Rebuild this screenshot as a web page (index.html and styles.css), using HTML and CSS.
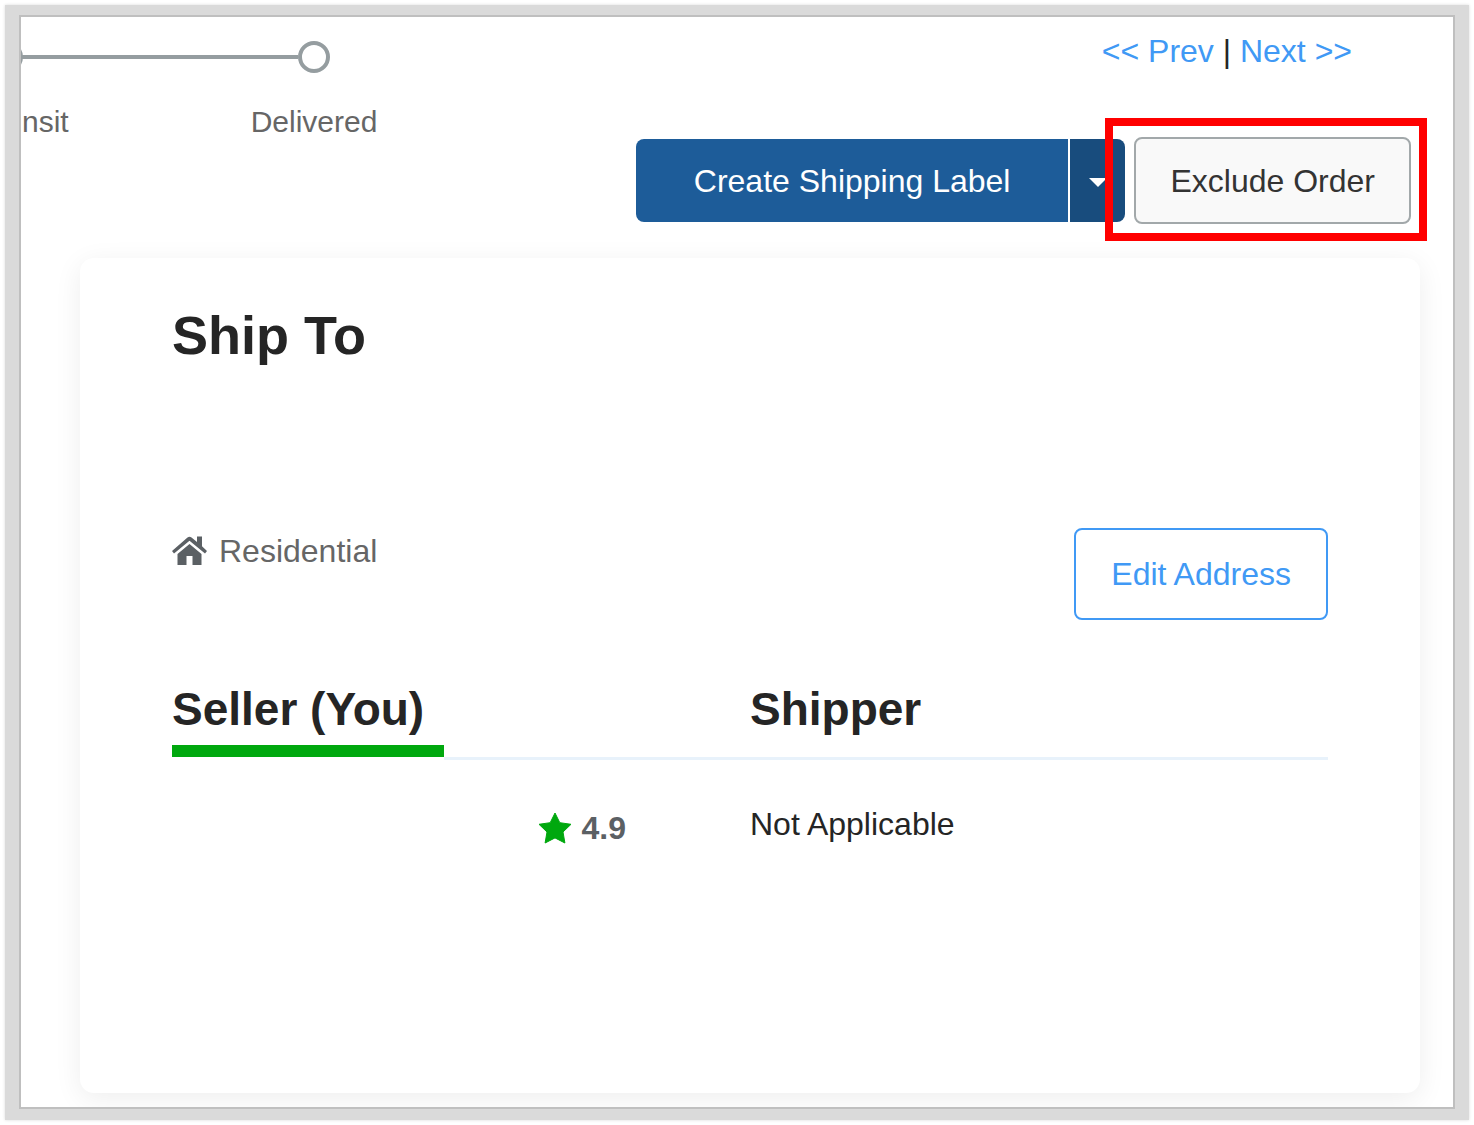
FILE: index.html
```html
<!DOCTYPE html>
<html lang="en">
<head>
	<meta charset="UTF-8">
	<title>Order Details</title>
	<link rel="stylesheet" href="styles.css">
</head>
<body>
	<div class="frame">
		<div class="page">
			<div class="header">
				<ol class="steps">
					<li class="step first"><span class="dot"></span>nsit</li>
					<li class="step"><span class="dot"></span>Delivered</li>
				</ol>
				<div class="tools">
					<div class="pager">
						<a href="#">&lt;&lt; Prev</a> | <a href="#">Next &gt;&gt;</a>
					</div>
					<div class="actions">
						<div class="split">
							<button type="button" class="btn create">Create Shipping Label</button>
							<button type="button" class="btn toggle" aria-label="More options"><span class="caret"></span></button>
						</div>
						<div class="marked">
							<button type="button" class="btn exclude">Exclude Order</button>
						</div>
					</div>
				</div>
			</div>
			<div class="card">
				<h1>Ship To</h1>
				<div class="address">
					<p class="type">
						<svg class="home" viewBox="0 0 36 30" aria-hidden="true">
							<path d="M17.500 8 L29.500 18 V29 H20.500 V20 H14.500 V29 H5.500 V18 Z"/>
							<path d="M0 15 L15.500 1.500 Q17.500 0 19.500 1.500 L25 6 V0.500 H30 V10.300 L35 15 L33 17.500 L17.500 4.800 L2 17.500 Z"/>
						</svg>
						Residential
					</p>
					<button type="button" class="btn edit">Edit Address</button>
				</div>
				<div class="parties">
					<h2><span class="current">Seller (You)</span></h2>
					<h2>Shipper</h2>
					<p class="rating">
						<svg class="star" viewBox="0 0 34 32" aria-hidden="true">
							<path d="M17 1 L21.800 10.700 L33 12.300 L25 20 L26.900 31 L17 25.900 L7.100 31 L9 20 L1 12.300 L12.200 10.700 Z"/>
						</svg>
						4.9
					</p>
					<p>Not Applicable</p>
				</div>
			</div>
		</div>
	</div>
</body>
</html>
```

FILE: styles.css
```css
*{
	box-sizing: border-box;
	margin: 0;
	padding: 0;
}
body{
	display: flex;
	min-height: 100vh;
	padding: 5px;
	background-color: #fff;
	color: #252525;
	font-family: "Liberation Sans", Arial, sans-serif;
	font-size: 32px;
	line-height: 36px;
}
a{
	color: #4099f5;
	text-decoration: none;
}
.frame{
	display: flex;
	flex: 1;
	padding: 10px 14px 11px;
	background-color: #dadada;
	box-shadow: 0 0 3px #dadada;
}
.page{
	display: flex;
	flex-direction: column;
	flex: 1;
	min-width: 0;
	overflow: hidden;
	border: 2px solid #bfbfbf;
	background-color: #fff;
}

/* order progress, pager and buttons */
.header{
	display: flex;
	justify-content: space-between;
	padding: 16px 42px 0 0;
}
.steps{
	display: flex;
	flex: none;
	padding-top: 8px;
	list-style: none;
}
.step{
	position: relative;
	width: 310px;
	color: #666;
	font-size: 30px;
	text-align: center;
}
.dot{
	display: block;
	width: 32px;
	height: 32px;
	margin: 0 auto 31px;
	border: 4px solid #959da0;
	border-radius: 50%;
}
.first{
	width: 138px;
	padding-left: 1px;
	text-align: left;
}
.first .dot{
	margin-left: -31px;
}
/* line between two dots */
.step + .step:before{
	content: "";
	position: absolute;
	top: 14px;
	right: 171px;
	width: 278px;
	height: 4px;
	background-color: #959da0;
}
.pager{
	padding-right: 59px;
	text-align: right;
}
.actions{
	display: flex;
	align-items: center;
	justify-content: flex-end;
	gap: 9px;
	margin-top: 68px;
}
.split{
	display: flex;
	gap: 2px;
}
.btn{
	border: none;
	border-radius: 8px;
	font: inherit;
	white-space: nowrap;
}
.create{
	height: 83px;
	padding: 0 58px;
	border-radius: 8px 0 0 8px;
	background-color: #1d5c99;
	color: #fff;
}
.toggle{
	width: 55px;
	border-radius: 0 8px 8px 0;
	background-color: #184c7d;
}
.caret{
	display: block;
	width: 0;
	margin: 4px auto 0;
	border: 9px solid transparent;
	border-top-color: #fff;
	border-bottom: 0;
}
.exclude{
	height: 87px;
	padding: 0 34px;
	border: 2px solid #a2a8aa;
	background-color: #f9f9f9;
	color: #333;
}
/* red callout round the button */
.marked{
	position: relative;
}
.marked:after{
	content: "";
	position: absolute;
	top: -19px;
	right: -16px;
	bottom: -17px;
	left: -29px;
	border: 8px solid #f00;
	pointer-events: none;
}

.card{
	flex: 1;
	margin: 34px 33px 14px 59px;
	padding: 45px 92px;
	border-radius: 14px;
	box-shadow: 0 6px 28px rgba(0,0,0,.07);
}
h1{
	font-size: 54px;
	line-height: 64px;
}
.address{
	display: flex;
	align-items: flex-start;
	justify-content: space-between;
	margin-top: 161px;
}
.type{
	display: flex;
	align-items: center;
	gap: 11px;
	color: #666;
	line-height: 46px;
}
.home{
	width: 36px;
	height: 30px;
	fill: #5b6064;
}
.edit{
	height: 92px;
	padding: 0 35px;
	border: 2px solid #4099f5;
	background-color: #fff;
	color: #4099f5;
}
.parties{
	display: grid;
	grid-template-columns: 1fr 1fr;
	margin-top: 53px;
}
h2{
	height: 87px;
	border-bottom: 3px solid #e8f2fb;
	font-size: 46px;
	line-height: 72px;
}
/* the white shadow hides the grey rule below the green bar */
.current{
	display: inline-block;
	padding-right: 20px;
	border-bottom: 12px solid #00a80e;
	box-shadow: 0 3px #fff;
}
.parties p{
	padding-top: 46px;
}
.parties .rating{
	display: flex;
	align-items: center;
	justify-content: flex-end;
	gap: 10px;
	padding: 50px 124px 0 0;
	color: #5b6064;
	font-weight: bold;
}
.star{
	width: 34px;
	height: 32px;
	fill: #00a80e;
	stroke: #00a80e;
	stroke-linejoin: round;
}
```
